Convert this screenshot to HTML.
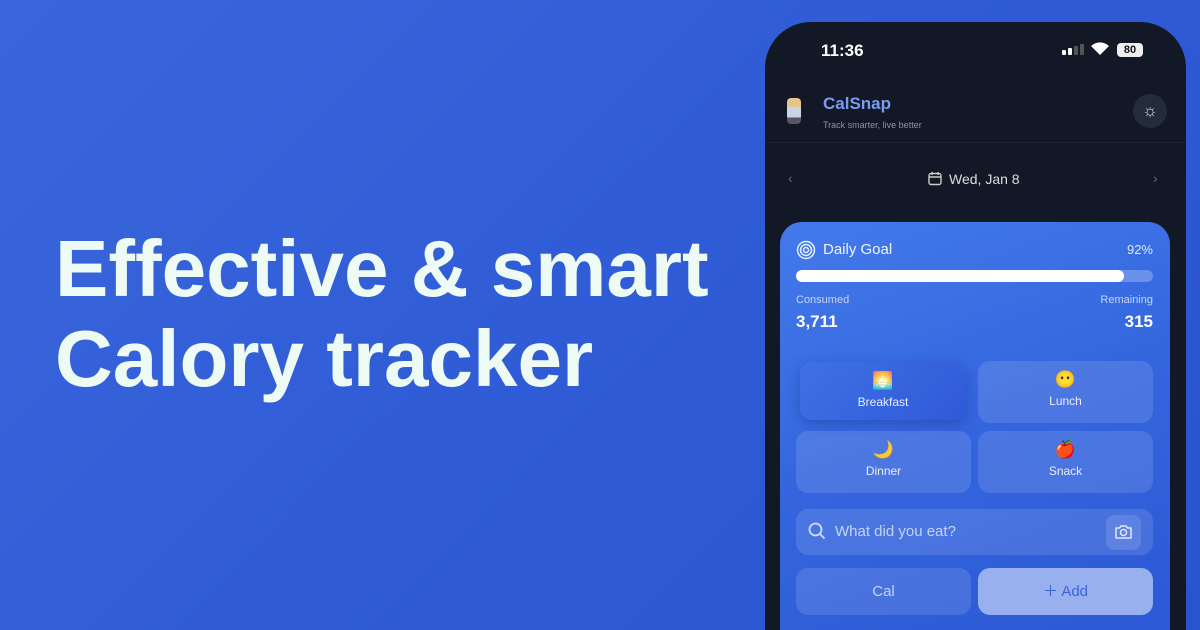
<!DOCTYPE html>
<html><head><meta charset="utf-8"><style>
*{margin:0;padding:0;box-sizing:border-box}
html,body{width:1200px;height:630px;overflow:hidden}
body{font-family:"Liberation Sans",sans-serif;background:linear-gradient(135deg,#3a66dc 0%,#2f5cd6 50%,#2a53cf 100%);position:relative}
.h{position:absolute;left:55px;top:224px;color:#eefbf4;font-weight:bold;font-size:80px;line-height:90px;letter-spacing:0}
.phone{position:absolute;left:765px;top:22px;width:421px;height:608px;background:#121826;border-radius:46px 46px 0 0;overflow:hidden}
.t{position:absolute;color:#fff}
.card{position:absolute;left:15px;top:200px;width:390px;height:408px;border-radius:22px 22px 0 0;background:linear-gradient(160deg,#437aea 0%,#3465de 50%,#2c59d6 100%)}
.tile{position:absolute;border-radius:12px;background:rgba(255,255,255,.12);color:#e8eeff;font-size:12px;text-align:center}
.tile span{display:block;font-size:17px;margin-top:9px;margin-bottom:4px;line-height:20px}
</style></head><body>
<div class="h">Effective &amp; smart<br>Calory tracker</div>
<div class="phone">
 <div class="t" style="left:56px;top:19px;font-size:17px;font-weight:bold">11:36</div>
 <div style="position:absolute;left:297px;top:28px;width:4px;height:5px;background:#fff;border-radius:1px"></div>
 <div style="position:absolute;left:303px;top:26px;width:4px;height:7px;background:#fff;border-radius:1px"></div>
 <div style="position:absolute;left:309px;top:24px;width:4px;height:9px;background:#555;border-radius:1px"></div>
 <div style="position:absolute;left:315px;top:22px;width:4px;height:11px;background:#555;border-radius:1px"></div>
 <svg style="position:absolute;left:325px;top:19px" width="20" height="15" viewBox="0 0 20 15"><path d="M10 14 L1 5 A13 13 0 0 1 19 5 Z" fill="#fff"/></svg>
 <div style="position:absolute;left:352px;top:21px;width:26px;height:14px;background:#eee;border-radius:4px;color:#111;font-size:11px;font-weight:bold;text-align:center;line-height:14px">80</div>
 <div style="position:absolute;left:22px;top:76px;width:14px;height:26px;background:linear-gradient(#e6c48a 0 35%,#c9d4e6 35% 75%,#556 75%);border-radius:4px"></div>
 <div class="t" style="left:58px;top:72px;font-size:17px;font-weight:bold;color:#7b9bf0">CalSnap</div>
 <div class="t" style="left:58px;top:98px;font-size:9px;color:#8a93a6">Track smarter, live better</div>
 <div style="position:absolute;left:368px;top:72px;width:34px;height:34px;border-radius:50%;background:#242b3a;color:#ddd;font-size:17px;text-align:center;line-height:34px">☼</div>
 <div style="position:absolute;left:0;top:120px;width:421px;height:1px;background:#1c2333"></div>
 <div class="t" style="left:23px;top:148px;color:#667;font-size:14px">‹</div>
 <div class="t" style="left:388px;top:148px;color:#667;font-size:14px">›</div>
 <svg style="position:absolute;left:163px;top:149px" width="14" height="15" viewBox="0 0 14 15"><rect x="1" y="2.5" width="12" height="11" rx="2" fill="none" stroke="#ccc" stroke-width="1.4"/><path d="M1 6h12M4 1v3M10 1v3" stroke="#ccc" stroke-width="1.4"/></svg>
 <div class="t" style="left:184px;top:149px;font-size:14px;color:#ddd">Wed, Jan 8</div>
 <div class="card">
  <svg style="position:absolute;left:16px;top:18px" width="20" height="20" viewBox="0 0 20 20" fill="none" stroke="#e8eeff" stroke-width="1.5"><circle cx="10" cy="10" r="8.5"/><circle cx="10" cy="10" r="5.5"/><circle cx="10" cy="10" r="2.5"/></svg>
  <div class="t" style="left:43px;top:19px;font-size:15px;color:#f0f4ff">Daily Goal</div>
  <div class="t" style="right:17px;top:20px;font-size:13px;color:#e0e8ff">92%</div>
  <div style="position:absolute;left:16px;top:48px;width:357px;height:12px;border-radius:6px;background:rgba(255,255,255,.25)"></div>
  <div style="position:absolute;left:16px;top:48px;width:328px;height:12px;border-radius:6px;background:#fff"></div>
  <div class="t" style="left:16px;top:72px;font-size:11px;color:#c8d5f8">Consumed</div>
  <div class="t" style="right:17px;top:72px;font-size:11px;color:#c8d5f8">Remaining</div>
  <div class="t" style="left:16px;top:90px;font-size:17px;font-weight:bold">3,711</div>
  <div class="t" style="right:17px;top:90px;font-size:17px;font-weight:bold">315</div>
  <div class="tile" style="left:20px;top:140px;width:166px;height:58px;background:linear-gradient(135deg,#3f70e4,#2f5ad8);box-shadow:0 4px 12px rgba(20,40,120,.35)"><span>🌅</span>Breakfast</div>
  <div class="tile" style="left:198px;top:139px;width:175px;height:62px"><span>😶</span>Lunch</div>
  <div class="tile" style="left:16px;top:209px;width:175px;height:62px"><span>🌙</span>Dinner</div>
  <div class="tile" style="left:198px;top:209px;width:175px;height:62px"><span>🍎</span>Snack</div>
  <div class="tile" style="left:16px;top:287px;width:357px;height:46px"></div>
  <svg style="position:absolute;left:28px;top:300px" width="18" height="18" viewBox="0 0 18 18" fill="none" stroke="#d0dcff" stroke-width="1.8"><circle cx="7.5" cy="7.5" r="6"/><path d="M12 12l4.5 4.5"/></svg>
  <div class="t" style="left:55px;top:301px;font-size:15px;color:#c6d4fa">What did you eat?</div>
  <div style="position:absolute;left:326px;top:293px;width:35px;height:35px;border-radius:8px;background:rgba(255,255,255,.12)"></div>
  <svg style="position:absolute;left:334px;top:302px" width="19" height="16" viewBox="0 0 19 16" fill="none" stroke="#e0e8ff" stroke-width="1.5"><path d="M2 4h3.5l1.5-2h5l1.5 2h3.5v10h-15z" stroke-linejoin="round"/><circle cx="9.5" cy="8.5" r="3"/></svg>
  <div class="tile" style="left:16px;top:346px;width:175px;height:47px;line-height:47px;font-size:15px;color:#c6d4fa">Cal</div>
  <div class="tile" style="left:198px;top:346px;width:175px;height:47px;line-height:47px;font-size:15px;background:#98b0ee;color:#3b63d8">＋ Add</div>
 </div>
</div>
</body></html>
